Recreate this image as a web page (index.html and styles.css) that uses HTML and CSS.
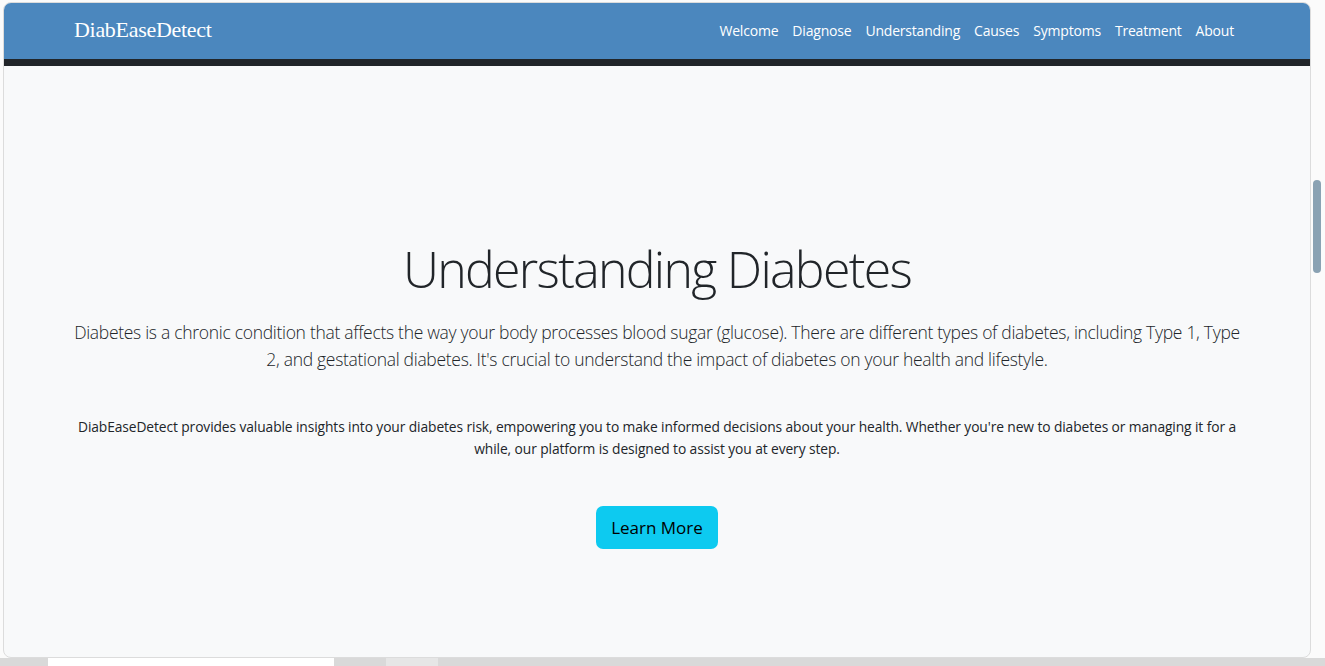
FILE: index.html
```html
<!DOCTYPE html>
<html lang="en">
<head>
<meta charset="utf-8">
<title>DiabEaseDetect</title>
<link rel="stylesheet" href="styles.css">
</head>
<body>
<div class="screen">
  <div class="row">
    <div class="frame">
      <header class="navbar">
        <div class="container nav-inner">
          <a class="brand" href="#">DiabEaseDetect</a>
          <nav class="links">
            <a href="#">Welcome</a>
            <a href="#">Diagnose</a>
            <a href="#">Understanding</a>
            <a href="#">Causes</a>
            <a href="#">Symptoms</a>
            <a href="#">Treatment</a>
            <a href="#">About</a>
          </nav>
        </div>
      </header>
      <div class="darkbar"></div>
      <main class="hero">
        <div class="container hero-inner">
          <h1 class="title">Understanding Diabetes</h1>
          <p class="lead">Diabetes is a chronic condition that affects the way your body processes blood sugar (glucose). There are different types of diabetes, including Type 1, Type 2, and gestational diabetes. It's crucial to understand the impact of diabetes on your health and lifestyle.</p>
          <p class="small">DiabEaseDetect provides valuable insights into your diabetes risk, empowering you to make informed decisions about your health. Whether you're new to diabetes or managing it for a while, our platform is designed to assist you at every step.</p>
          <a class="btn" href="#">Learn More</a>
        </div>
      </main>
    </div>
    <div class="scrolltrack"><div class="thumb"></div></div>
  </div>
  <div class="bottombar">
    <div class="seg seg1"></div>
    <div class="seg seg2"></div>
    <div class="seg seg3"></div>
  </div>
</div>
</body>
</html>
```
FILE: styles.css
```css
* { box-sizing: border-box; }
html, body { margin: 0; padding: 0; }
body {
  width: 1325px;
  height: 666px;
  overflow: hidden;
  background: #fbfbfb;
  font-family: "Open Sans", "Noto Sans", sans-serif;
}
.screen { display: flex; flex-direction: column; height: 666px; }
.row { display: flex; flex: 1; padding: 2px 0 0 3px; }
.frame {
  width: 1308px;
  height: 656px;
  border: 1px solid #dcdcdc;
  border-radius: 8px;
  overflow: hidden;
  background: #f8f9fa;
  display: flex;
  flex-direction: column;
}
.container { width: 1166px; margin: 0 auto; }
.navbar {
  background: #4b87be;
  height: 56px;
  flex: none;
}
.nav-inner {
  height: 100%;
  display: flex;
  align-items: center;
  justify-content: space-between;
  padding-left: 0;
  padding-right: 6px;
}
.brand {
  font-family: "Liberation Serif", "Times New Roman", serif;
  font-size: 22px;
  color: #fff;
  text-decoration: none;
  letter-spacing: -0.3px;
  margin-top: -3px;
}
.links { display: flex; gap: 14px; margin-top: -2px; }
.links a {
  color: #fff;
  text-decoration: none;
  font-size: 14px;
  letter-spacing: -0.2px;
}
.darkbar { height: 7px; background: #212529; flex: none; }
.hero { flex: 1; }
.hero-inner {
  display: flex;
  flex-direction: column;
  align-items: center;
  text-align: center;
  padding-top: 170px;
  color: #212529;
}
.title {
  margin: 0;
  font-size: 50px;
  font-weight: 300;
  line-height: 67px;
  letter-spacing: -1.7px;
}
.lead {
  margin: 16px 0 0;
  font-size: 17.5px;
  font-weight: 300;
  line-height: 27px;
  letter-spacing: -0.3px;
}
.small {
  margin: 43px 0 0;
  font-size: 13.8px;
  line-height: 22px;
  letter-spacing: -0.1px;
}
.btn {
  margin-top: 46px;
  background: #0dcaf0;
  color: #000;
  text-decoration: none;
  font-size: 17px;
  line-height: 27px;
  padding: 8px 15px;
  border-radius: 7px;
}
.scrolltrack {
  width: 14px;
  position: relative;
}
.thumb {
  position: absolute;
  left: 2px;
  top: 178px;
  width: 8px;
  height: 93px;
  border-radius: 4px;
  background: #8aa2b3;
}
.bottombar {
  height: 8px;
  background: #d9d9d9;
  display: flex;
}
.seg1 { width: 48px; }
.seg2 { width: 286px; background: #ffffff; }
.seg3 { width: 52px; margin-left: 52px; background: #e6e6e6; }
```
